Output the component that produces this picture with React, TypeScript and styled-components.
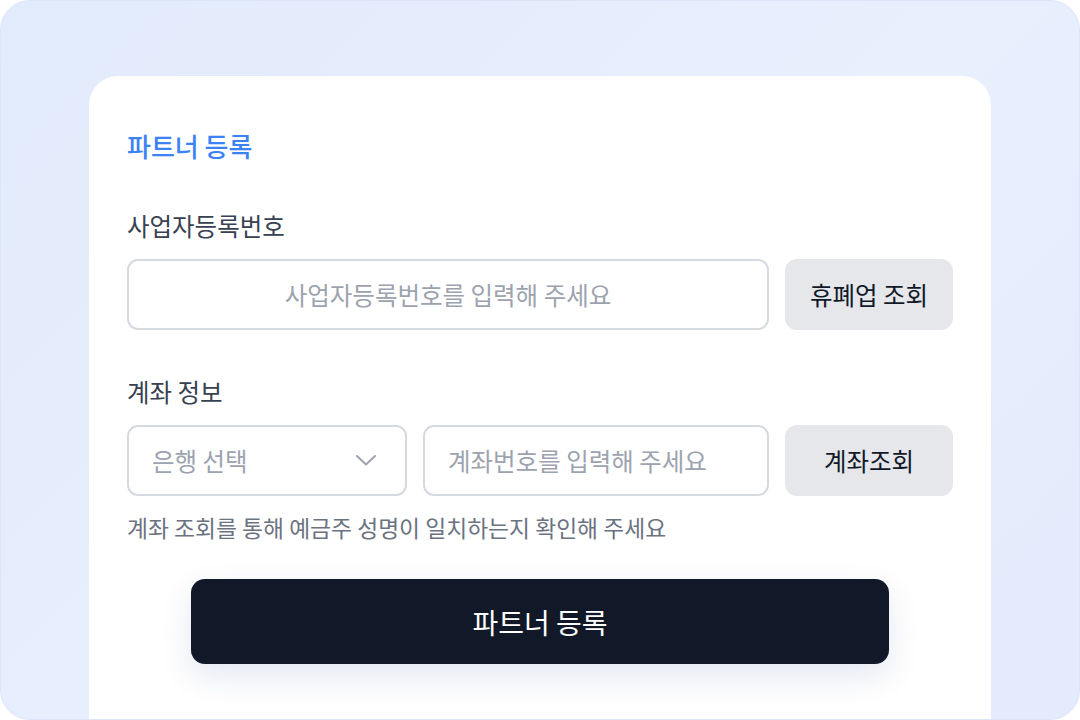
import React from "react";
import styled, { createGlobalStyle } from "styled-components";

const Global = createGlobalStyle`
  html, body { margin: 0; padding: 0; background: #ffffff; }
  body { font-family: "Noto Sans CJK KR", "Noto Sans", sans-serif; }
  * { box-sizing: border-box; }
`;

const Frame = styled.div`
  width: 1080px;
  height: 720px;
  border: 1px solid #dce6f9;
  border-radius: 30px;
  overflow: hidden;
  background: linear-gradient(135deg, #e2ebfb 0%, #e8effd 55%, #e3ebfc 100%);
  display: flex;
  flex-direction: column;
`;

const Card = styled.section`
  flex: 1;
  margin: 75px 88px 0 88px;
  background: #ffffff;
  border-radius: 29px 29px 0 0;
  padding: 52px 38px 0 38px;
  display: flex;
  flex-direction: column;
`;

const Title = styled.h1`
  margin: 0;
  font-size: 26px;
  line-height: 36px;
  font-weight: 500;
  color: #3b82f6;
`;

const Label = styled.div<{ $top: number }>`
  margin-top: ${(p) => p.$top}px;
  font-size: 24.5px;
  line-height: 33px;
  font-weight: 400;
  color: #374151;
`;

const Row = styled.div`
  margin-top: 17.5px;
  display: flex;
  gap: 16px;
  height: 71px;
`;

const TextInput = styled.input<{ $center?: boolean }>`
  flex: 1;
  min-width: 0;
  height: 100%;
  border: 2px solid #d5d9e0;
  border-radius: 11px;
  padding: 0 23px;
  font-family: inherit;
  font-size: 24.5px;
  color: #111827;
  background: #fff;
  outline: none;
  text-align: ${(p) => (p.$center ? "center" : "left")};
  &::placeholder { color: #9ca3af; }
`;

const SelectBox = styled.div`
  width: 280px;
  flex: none;
  height: 100%;
  border: 2px solid #d5d9e0;
  border-radius: 11px;
  padding: 0 28px 0 23px;
  display: flex;
  align-items: center;
  justify-content: space-between;
  font-size: 24.5px;
  color: #9ca3af;
`;

const GrayButton = styled.button`
  width: 168px;
  flex: none;
  height: 100%;
  border: none;
  border-radius: 12px;
  background: #e5e7eb;
  color: #111827;
  font-family: inherit;
  font-size: 24.5px;
  font-weight: 400;
  cursor: pointer;
`;

const Helper = styled.p`
  margin: 17px 0 0 0;
  font-size: 22.8px;
  line-height: 30px;
  color: #6b7280;
`;

const SubmitWrap = styled.div`
  margin-top: 36px;
  display: flex;
  justify-content: center;
`;

const Submit = styled.button`
  width: 698px;
  height: 85px;
  border: none;
  border-radius: 14px;
  background: #111827;
  color: #ffffff;
  font-family: inherit;
  font-size: 28px;
  font-weight: 400;
  box-shadow: 0 12px 32px rgba(30, 58, 138, 0.12);
  cursor: pointer;
`;

const Chevron = () => (
  <svg width="22" height="13" viewBox="0 0 22 13" fill="none">
    <path d="M2 2l9 8.5L20 2" stroke="#9ca3af" strokeWidth="2" strokeLinecap="round" strokeLinejoin="round" />
  </svg>
);

export default function App() {
  return (
    <>
      <Global />
      <Frame>
        <Card>
          <Title>파트너 등록</Title>
          <Label $top={44.5}>사업자등록번호</Label>
          <Row>
            <TextInput $center placeholder="사업자등록번호를 입력해 주세요" />
            <GrayButton>휴폐업 조회</GrayButton>
          </Row>
          <Label $top={44.5}>계좌 정보</Label>
          <Row>
            <SelectBox>
              <span>은행 선택</span>
              <Chevron />
            </SelectBox>
            <TextInput placeholder="계좌번호를 입력해 주세요" />
            <GrayButton>계좌조회</GrayButton>
          </Row>
          <Helper>계좌 조회를 통해 예금주 성명이 일치하는지 확인해 주세요</Helper>
          <SubmitWrap>
            <Submit>파트너 등록</Submit>
          </SubmitWrap>
        </Card>
      </Frame>
    </>
  );
}
